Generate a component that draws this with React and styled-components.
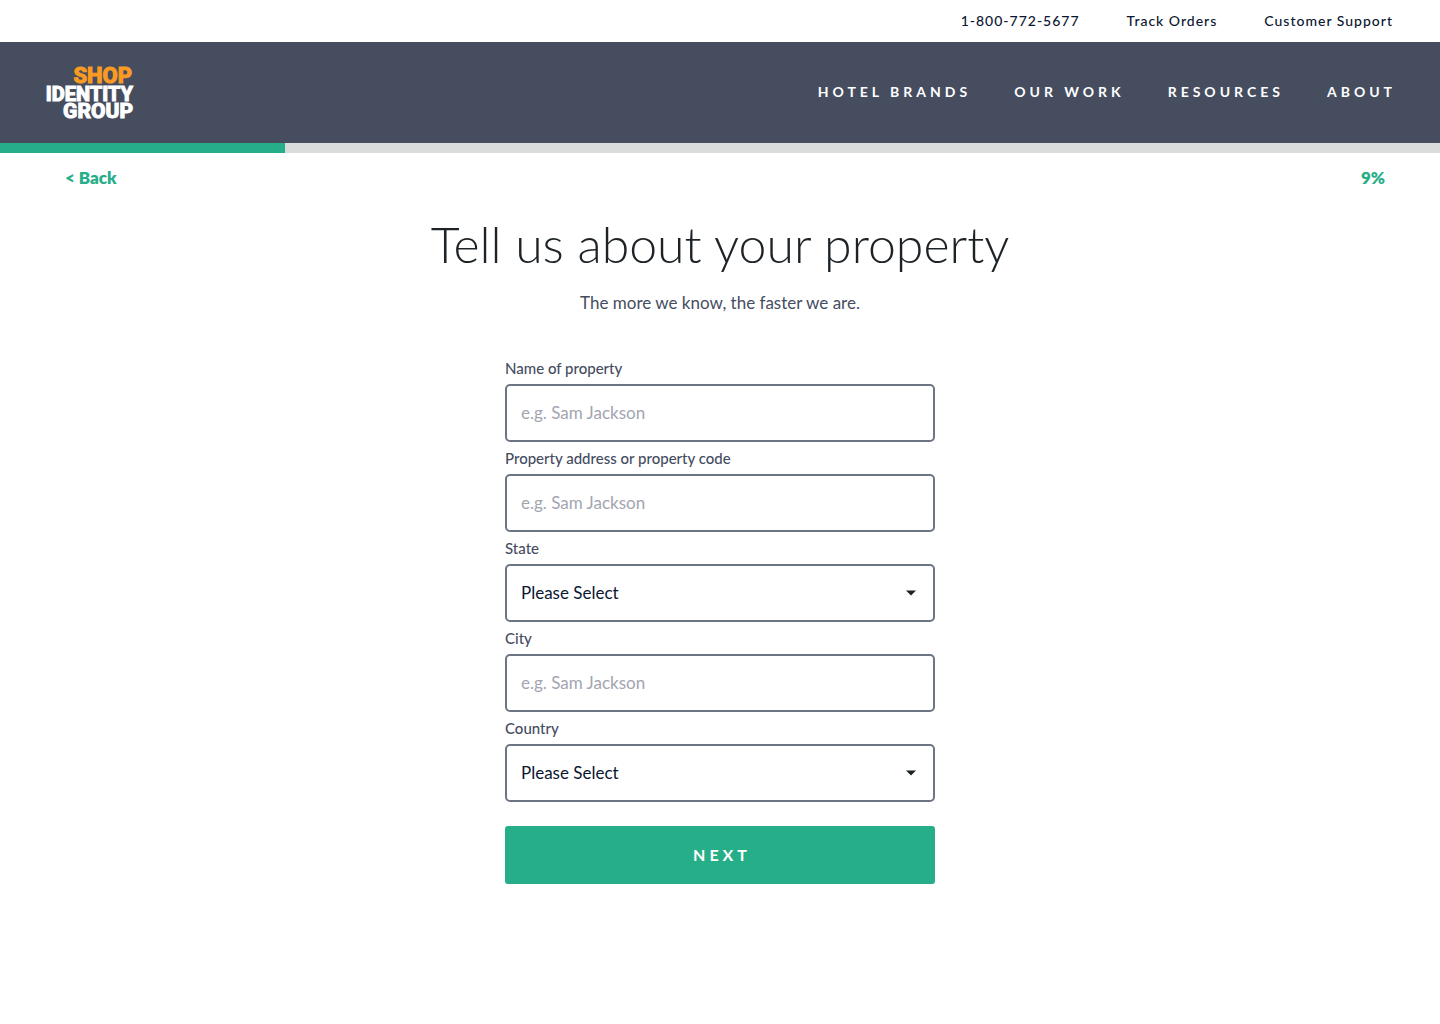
import React from 'react'
import styled, { createGlobalStyle } from 'styled-components'

const GlobalStyle = createGlobalStyle`
  *, *::before, *::after {
    box-sizing: border-box;
  }
  body {
    margin: 0;
    background-color: #fff;
    color: #0b1630;
    font-family: Lato, 'Open Sans', sans-serif;
    font-size: 16px;
  }
  input, select, button {
    font-family: inherit;
  }
`

const TopBar = styled.nav`
  display: flex;
  justify-content: flex-end;
  align-items: center;
  gap: 47px;
  height: 42px;
  padding: 0 47px 2px;
`

const TopLink = styled.a`
  color: #0b1630;
  font-size: 14px;
  font-weight: 500;
  letter-spacing: 1px;
  text-decoration: none;
`

const Header = styled.header`
  display: flex;
  justify-content: space-between;
  align-items: center;
  height: 101px;
  padding: 0 44px;
  background-color: #454d5f;
`

const Nav = styled.nav`
  display: flex;
  gap: 43px;
  padding-bottom: 2px;
`

const NavLink = styled.a`
  color: #fff;
  font-size: 14px;
  font-weight: 700;
  letter-spacing: 4px;
  text-decoration: none;
  text-transform: uppercase;
`

const LogoLink = styled.a`
  display: block;
  height: 61px;
`

const LogoText = styled.text`
  font-family: Roboto, 'Open Sans', sans-serif;
  font-size: ${({ $size }) => $size}px;
  font-weight: 800;
  fill: ${({ $color }) => $color};
  stroke: ${({ $color }) => $color};
  stroke-width: 1px;
  text-anchor: end;
`

const Track = styled.div`
  height: 10px;
  background-color: #dadcdb;
`

const Bar = styled.div`
  height: 100%;
  background-color: #26ae88;
`

const StepRow = styled.div`
  display: flex;
  justify-content: space-between;
  padding: 13px 55px 0 65px;
  color: #26ae88;
  font-size: 17px;
  font-weight: 800;
  line-height: 24px;
`

const BackLink = styled.a`
  color: inherit;
  text-decoration: none;
`

const Main = styled.main`
  padding: 23px 24px 48px;
  text-align: center;
`

const Title = styled.h1`
  margin: 0;
  color: #1c2226;
  font-size: 50px;
  font-weight: 300;
  line-height: 62px;
`

const Subtitle = styled.p`
  margin: 14px 0 35px;
  color: #454d5f;
  font-size: 17px;
  line-height: 28px;
`

const Form = styled.form`
  width: 100%;
  max-width: 430px;
  margin: 0 auto;
  text-align: left;
`

const Label = styled.label`
  display: block;
  color: #454d5f;
  font-size: 15px;
  font-weight: 500;
  line-height: 32px;
`

const Input = styled.input`
  display: block;
  width: 100%;
  height: 58px;
  padding: 0 14px 2px;
  border: 2px solid #6c7583;
  border-radius: 5px;
  background-color: #fff;
  color: #0b1630;
  font-size: 17px;
  &::placeholder {
    color: #a2a5b0;
    opacity: 1;
  }
`

const SelectWrap = styled.div`
  display: grid;
  align-items: center;
  & > * {
    grid-area: 1 / 1;
  }
`

const Select = styled(Input).attrs({ as: 'select' })`
  appearance: none;
`

const Caret = styled.svg`
  justify-self: end;
  margin-right: 18px;
  pointer-events: none;
`

const NextButton = styled.button`
  display: block;
  width: 100%;
  height: 58px;
  margin-top: 24px;
  padding: 0 0 2px;
  border: 0;
  border-radius: 3px;
  background-color: #26ae88;
  color: #fff;
  font-size: 16px;
  font-weight: 700;
  letter-spacing: 4px;
  text-indent: 4px;
  cursor: pointer;
`

const topLinks = ['1-800-772-5677', 'Track Orders', 'Customer Support']
const navLinks = ['Hotel Brands', 'Our Work', 'Resources', 'About']

const fields = [
  { id: 'name', label: 'Name of property' },
  { id: 'address', label: 'Property address or property code' },
  { id: 'state', label: 'State', select: true },
  { id: 'city', label: 'City' },
  { id: 'country', label: 'Country', select: true },
]

const Logo = () => (
  <LogoLink href="#" aria-label="Shop Identity Group">
    <svg width="92" height="61" viewBox="0 0 92 61">
      <LogoText x="88" y="21" $size={22} $color="#f99b23">SHOP</LogoText>
      <LogoText x="89" y="39" $size={20} $color="#fff">IDENTITY</LogoText>
      <LogoText x="89" y="56" $size={21} $color="#fff">GROUP</LogoText>
    </svg>
  </LogoLink>
)

const Field = ({ id, label, select }) => (
  <div>
    <Label htmlFor={id}>{label}</Label>
    {select ? (
      <SelectWrap>
        <Select id={id} defaultValue="">
          <option value="">Please Select</option>
        </Select>
        <Caret width="12" height="6" viewBox="0 0 12 6">
          <path d="M1 0.5h10L6 5.5z" fill="#1c2226" />
        </Caret>
      </SelectWrap>
    ) : (
      <Input id={id} type="text" placeholder="e.g. Sam Jackson" />
    )}
  </div>
)

const App = () => {
  const done = 19.8
  return (
    <>
      <GlobalStyle />
      <TopBar>
        {topLinks.map(text => <TopLink key={text} href="#">{text}</TopLink>)}
      </TopBar>
      <Header>
        <Logo />
        <Nav>
          {navLinks.map(text => <NavLink key={text} href="#">{text}</NavLink>)}
        </Nav>
      </Header>
      <Track>
        <Bar style={{ width: `${done}%` }} />
      </Track>
      <StepRow>
        <BackLink href="#">&lt; Back</BackLink>
        <span>9%</span>
      </StepRow>
      <Main>
        <Title>Tell us about your property</Title>
        <Subtitle>The more we know, the faster we are.</Subtitle>
        <Form>
          {fields.map(field => <Field key={field.id} {...field} />)}
          <NextButton type="button">NEXT</NextButton>
        </Form>
      </Main>
    </>
  );
}

export default App
